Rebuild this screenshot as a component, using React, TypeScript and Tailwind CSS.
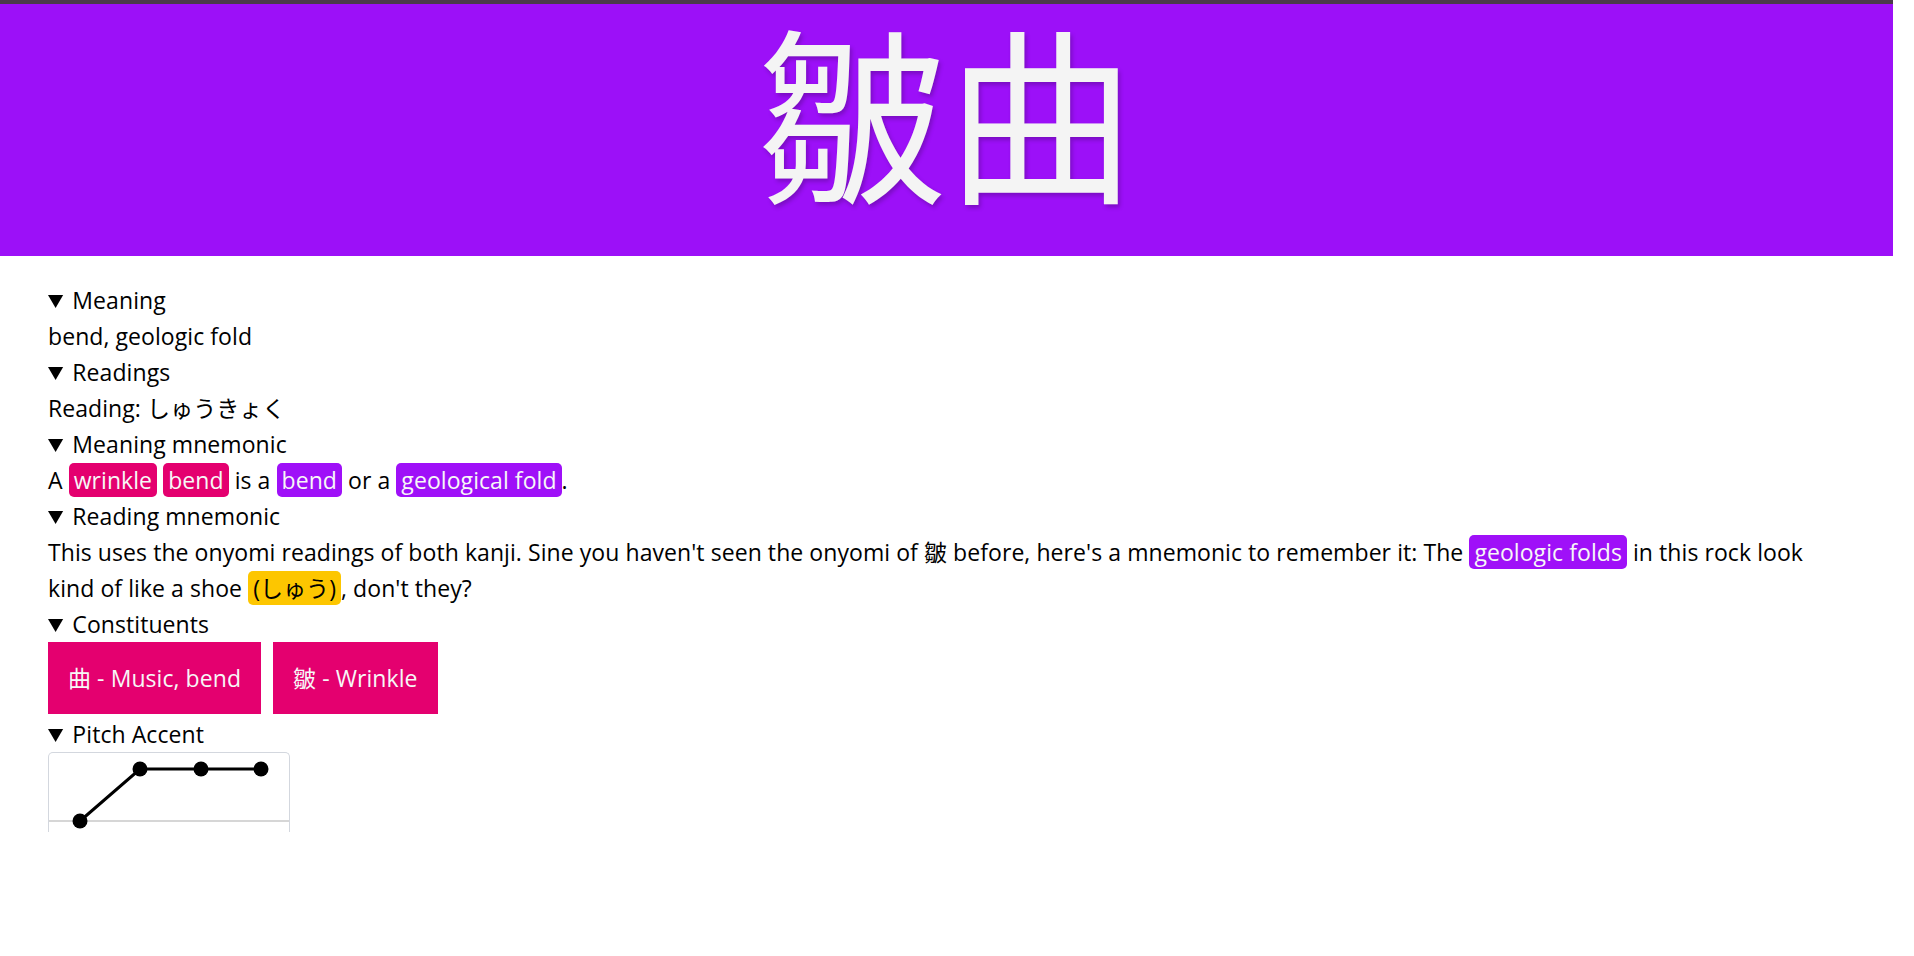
import React from "react";

const Chip = ({ color, children }: { color: "pink" | "purple" | "yellow"; children: React.ReactNode }) => {
  const cls =
    color === "pink"
      ? "bg-[#e4006f] text-[#f7f7f7]"
      : color === "purple"
        ? "bg-[#9f10f8] text-[#f7f7f7]"
        : "bg-[#fdc600] text-black";
  return <span className={`${cls} rounded-[5px] px-[5px] py-[1px]`}>{children}</span>;
};

function Section({ title, children }: { title: string; children: React.ReactNode }) {
  return (
    <details open>
      <summary className="cursor-pointer">{title}</summary>
      {children}
    </details>
  );
}

function PitchChart() {
  const pts = [
    [31, 68],
    [91, 16],
    [152, 16],
    [212, 16],
  ];
  return (
    <div className="w-[242px] h-[80px] overflow-hidden border-t border-l border-r border-[#d3d7de] rounded-t-[5px]">
      <svg width="240" height="80" viewBox="0 0 240 80">
        <line x1="0" y1="68" x2="240" y2="68" stroke="#d6d6d6" strokeWidth="2" />
        <polyline
          points={pts.map((p) => p.join(",")).join(" ")}
          fill="none"
          stroke="#000"
          strokeWidth="3"
        />
        {pts.map(([x, y], i) => (
          <circle key={i} cx={x} cy={y} r="7.5" fill="#000" />
        ))}
      </svg>
    </div>
  );
}

export default function App() {
  return (
    <div className="w-[1893px] min-h-[956px] bg-white text-black">
      <div className="h-[4px] bg-[#4b3a4a]" />
      {/* big kanji header */}
      <div className="h-[252px] bg-[#9c10f8] flex justify-center overflow-hidden">
        <h1
          className="text-[189px] leading-[206px] text-[#f4f4f4] font-normal [text-shadow:2px_3px_4px_rgba(0,0,0,0.22)]"
          style={{ fontFamily: '"Noto Sans CJK JP", sans-serif' }}
        >
          皺曲
        </h1>
      </div>

      <div
        className="pl-12 pr-[60px] pt-[26px] text-[23px] leading-[36px] tracking-[0.07px]"
        style={{ fontFamily: '"Open Sans", "Noto Sans CJK JP", sans-serif' }}
      >
        <Section title="Meaning">
          <div>bend, geologic fold</div>
        </Section>
        <Section title="Readings">
          <div>Reading: しゅうきょく</div>
        </Section>
        <Section title="Meaning mnemonic">
          <div>
            A <Chip color="pink">wrinkle</Chip> <Chip color="pink">bend</Chip> is a{" "}
            <Chip color="purple">bend</Chip> or a <Chip color="purple">geological fold</Chip>.
          </div>
        </Section>
        <Section title="Reading mnemonic">
          <div>
            This uses the onyomi readings of both kanji. Sine you haven't seen the onyomi of 皺 before,
            here's a mnemonic to remember it: The <Chip color="purple">geologic folds</Chip> in this
            rock look kind of like a shoe <Chip color="yellow">(しゅう)</Chip>, don't they?
          </div>
        </Section>
        <Section title="Constituents">
          <div className="flex gap-3 mb-[2px]">
            <button className="bg-[#e4006f] text-[#f7f7f7] px-5 py-[18px] leading-[36px]">
              曲 - Music, bend
            </button>
            <button className="bg-[#e4006f] text-[#f7f7f7] px-5 py-[18px] leading-[36px]">
              皺 - Wrinkle
            </button>
          </div>
        </Section>
        <Section title="Pitch Accent">
          <PitchChart />
        </Section>
      </div>
    </div>
  );
}
